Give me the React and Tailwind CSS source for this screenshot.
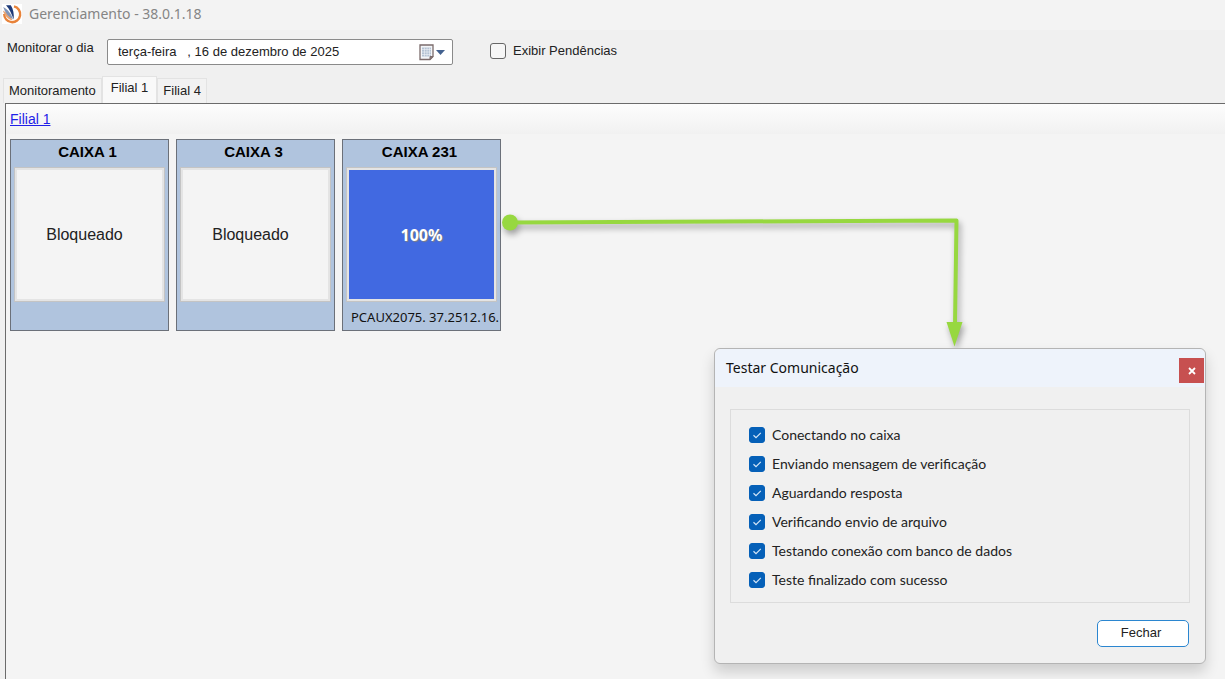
import { useState } from "react";
import clsx from "clsx";

const tabs = ["Monitoramento", "Filial 1", "Filial 4"];

const registers = [
  { name: "CAIXA 1", status: "Bloqueado" },
  { name: "CAIXA 3", status: "Bloqueado" },
  { name: "CAIXA 231", progress: "100%", version: "PCAUX2075. 37.2512.16." },
];

const steps = [
  "Conectando no caixa",
  "Enviando mensagem de verificação",
  "Aguardando resposta",
  "Verificando envio de arquivo",
  "Testando conexão com banco de dados",
  "Teste finalizado com sucesso",
];

function AppLogo() {
  return (
    <svg viewBox="0 0 20 20" className="w-5 h-5 bg-white" aria-hidden="true">
      <path d="M12 2.4A8 8 0 1 1 2.200 10" fill="none" stroke="#e8833a" strokeWidth="2.400" />
      <path d="M0.800 6.500C5 8.500 8.500 11.500 10.500 16.500C6 15.500 2.500 11.500 0.800 6.500Z" fill="#e8a473" />
      <path d="M1.200 3C6 5.500 9.500 10 11 15.500C6.500 13 3 8.500 1.200 3Z" fill="#8195b8" />
      <path d="M4 1.200L8.800 1.200C11.300 5 12.300 10 11.600 15.500C9.800 10 7.500 5 4 1.200Z" fill="#1d3a78" />
    </svg>
  );
}

function CalendarIcon() {
  return (
    <svg viewBox="0 0 26 17" className="w-[26px] h-[17px]" aria-hidden="true">
      <path d="M1 1H14V12.500L11 15.500H1Z" fill="#f3f5f8" stroke="#7b6b6b" strokeWidth="1.300" />
      <path d="M3 3.500H12V12.500H3Z" fill="#b4c2d3" />
      <path d="M3 5.500H12M3 8H12M3 10.500H12M5.500 3.500V12.500M8 3.500V12.500M10.500 3.500V12.500" stroke="#eef2f7" strokeWidth="0.600" />
      <path d="M11 15.500V12.500H14Z" fill="#8b7b7b" stroke="#7b6b6b" />
      <path d="M17 6H26L21.500 11Z" fill="#43618f" />
    </svg>
  );
}

function RegisterCard({ name, status, progress, version }) {
  return (
    <article className="w-[159px] h-48 shrink-0 flex flex-col bg-[#b0c4de] border border-[#6b7079] px-[3px]">
      <h2 className="h-[27px] pr-1 text-center font-bold text-[15px] leading-6 text-black">{name}</h2>
      <div className="h-[135px] flex border border-[#c4c4c4] p-0.5 bg-[#e4e4e4]">
        {progress ? (
          <div className="flex-1 flex items-center justify-center bg-[#4169e1] font-['Noto_Sans'] font-bold text-base text-white [text-shadow:1px_1px_1px_#808080]">
            {progress}
          </div>
        ) : (
          <div className="flex-1 flex items-center justify-center bg-[#f4f4f4] pr-2.5 text-base text-[#222]">
            {status}
          </div>
        )}
      </div>
      {version && (
        <p className="-mr-[3px] pl-[5px] pt-[3px] font-['Noto_Sans'] text-[13px] leading-6 text-[#111] whitespace-nowrap">
          {version}
        </p>
      )}
    </article>
  );
}

// Arrow linking the register card to the dialog
function Connector() {
  return (
    <svg
      viewBox="0 0 480 150"
      className="absolute left-[495px] top-[205px] w-[480px] h-[150px] pointer-events-none drop-shadow-[2px_4px_3px_rgba(0,0,0,0.35)]"
      aria-hidden="true"
    >
      <circle cx="15" cy="17.500" r="8" fill="#97d840" />
      <path d="M15 17.500L461.500 15.500L460 120" fill="none" stroke="#97d840" strokeWidth="4" strokeLinejoin="round" />
      <path d="M451.500 117H467.500L459.500 141.500Z" fill="#97d840" />
    </svg>
  );
}

function TestDialog({ onClose }) {
  return (
    <section
      role="dialog"
      aria-labelledby="dialog-title"
      className="absolute right-[19px] top-[348px] w-[492px] bg-[#f0f0f0] border border-[#b4b4b4] rounded-md shadow-[0_8px_14px_rgba(0,0,0,0.16)]"
    >
      <header className="h-[38px] flex justify-between bg-[#eef3fb] rounded-t-md pl-[11px] pr-px">
        <h2 id="dialog-title" className="font-['Noto_Sans'] text-sm leading-[38px] text-[#111]">Testar Comunicação</h2>
        <button
          type="button"
          aria-label="Fechar janela"
          onClick={onClose}
          className="mt-[9px] w-[25px] h-[25px] flex items-center justify-center bg-[#c75050]"
        >
          <svg viewBox="0 0 8 8" className="w-2 h-2" aria-hidden="true">
            <path d="M1 1L7 7M7 1L1 7" stroke="#fff" strokeWidth="1.800" />
          </svg>
        </button>
      </header>
      <div className="px-[15px] pt-[22px] pb-4">
        <ul className="border border-[#dcdcdc] pl-[18px] pt-2.5 pb-2">
          {steps.map((step) => (
            <li key={step}>
              <label className="h-[29px] flex items-center gap-[7px] font-[Lato] text-[#222]">
                <span className="grid w-4 h-4">
                  <input
                    type="checkbox"
                    defaultChecked
                    className="appearance-none col-start-1 row-start-1 w-4 h-4 rounded-[3px] border border-[#0560b8] bg-white checked:bg-[#0560b8]"
                  />
                  <svg viewBox="0 0 16 16" className="col-start-1 row-start-1 w-4 h-4 pointer-events-none" aria-hidden="true">
                    <path d="M4.500 8.200L7 10.600L11.800 5.800" fill="none" stroke="#d5e6f7" strokeWidth="1.200" />
                  </svg>
                </span>
                {step}
              </label>
            </li>
          ))}
        </ul>
        <div className="flex justify-end pt-[17px] pr-px">
          <button
            type="button"
            onClick={onClose}
            className="w-[92px] h-[27px] bg-white border border-[#2b86d0] rounded-[5px] pr-1 text-[13px] text-[#222]"
          >
            Fechar
          </button>
        </div>
      </div>
    </section>
  );
}

export default function App() {
  const [activeTab, setActiveTab] = useState("Filial 1");
  const [dialogOpen, setDialogOpen] = useState(true);
  const [date, setDate] = useState("terça-feira   , 16 de dezembro de 2025");

  return (
    <div className="relative min-h-screen flex flex-col bg-[#f0f0f0] font-['Liberation_Sans',Arial,sans-serif] text-sm text-[#222] overflow-hidden">
      <header className="h-[30px] flex items-center gap-[7px] pl-0.5 pb-0.5 bg-[#f3f3f3] font-['Noto_Sans'] text-[#858585]">
        <AppLogo />
        <h1>Gerenciamento - 38.0.1.18</h1>
      </header>

      <div className="h-[46px] flex items-start pl-[7px] pt-2">
        <label htmlFor="monitor-date" className="w-[100px] text-[13px] leading-5">Monitorar o dia</label>
        <div className="w-[346px] h-[26px] mt-px flex items-center bg-white border border-[#8a8a8a] rounded-xs pl-[10px] pr-[7px]">
          <input
            id="monitor-date"
            type="text"
            value={date}
            onChange={(e) => setDate(e.target.value)}
            className="flex-1 min-w-0 whitespace-pre text-[13px] outline-none"
          />
          <button type="button" aria-label="Abrir calendário">
            <CalendarIcon />
          </button>
        </div>
        <label className="ml-[37px] mt-[3px] flex items-center gap-[7px] text-[13px] leading-5">
          <input type="checkbox" className="appearance-none w-4 h-4 rounded-[3px] border border-[#666] bg-[#f6f6f6] checked:bg-[#0560b8]" />
          Exibir Pendências
        </label>
      </div>

      <nav role="tablist" className="h-[27px] flex items-end pl-[3px] text-[13px]">
        {tabs.map((tab) => (
          <button
            key={tab}
            type="button"
            role="tab"
            aria-selected={tab === activeTab}
            onClick={() => setActiveTab(tab)}
            className={clsx(
              "border border-b-0 border-[#e3e3e3]",
              tab === activeTab ? "h-[27px] px-2 pb-1 bg-[#f9f9f9]" : "h-[25px] px-[5px] bg-[#f2f2f2]"
            )}
          >
            {tab}
          </button>
        ))}
      </nav>

      <main className="flex-1 ml-[5px] border-t border-l border-[#6b6b6b] bg-[#f4f4f4] bg-[linear-gradient(#fdfdfd,#f1f1f1)] bg-[length:100%_30px] bg-no-repeat">
        <a href="#filial-1" className="block w-fit ml-1 pt-[5px] leading-5 text-[#1f1fe8] underline">Filial 1</a>
        <div className="flex gap-[7px] pl-1 pt-2.5">
          {registers.map((register) => (
            <RegisterCard key={register.name} {...register} />
          ))}
        </div>
      </main>

      {dialogOpen && (
        <>
          <Connector />
          <TestDialog onClose={() => setDialogOpen(false)} />
        </>
      )}
    </div>
  );
}
